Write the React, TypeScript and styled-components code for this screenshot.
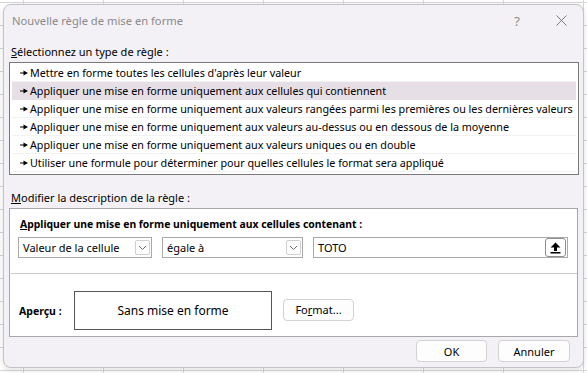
import React from 'react';
import styled, { createGlobalStyle } from 'styled-components';

// Page: Excel grid behind the dialog
const GlobalStyle = createGlobalStyle`
  html, body {
    margin: 0;
    padding: 0;
    width: 587px;
    height: 373px;
    overflow: hidden;
    background-color: #ffffff;
    background-image:
      repeating-linear-gradient(90deg, transparent 0 23px, #d6d6d6 23px 24px, transparent 24px 80px),
      repeating-linear-gradient(180deg, transparent 0 2px, #d6d6d6 2px 3px, transparent 3px 23px);
    font-family: "Segoe UI", "Noto Sans", sans-serif;
    font-size: 11px;
    color: #000;
  }
  #root {
    padding: 4px 3px 0 3px;
  }
`;

const Dialog = styled.div`
  width: 581px;
  height: 364px;
  box-sizing: border-box;
  background: #f3f1f5;
  border: 1px solid #c4c2c6;
  border-radius: 8px;
  box-shadow: 0 2px 6px rgba(0, 0, 0, 0.12);
  display: flex;
  flex-direction: column;
`;

const TitleBar = styled.div`
  height: 31px;
  display: flex;
  align-items: center;
  padding: 0 0 0 8px;
`;

const Title = styled.div`
  flex: 1;
  font-size: 11.2px;
  color: #8a8a8a;
`;

const TitleButton = styled.div`
  width: 44px;
  height: 31px;
  display: flex;
  align-items: center;
  justify-content: center;
  color: #8a8a8a;
  font-size: 13px;
`;

const Body = styled.div`
  padding: 0 4px 0 5px;
  display: flex;
  flex-direction: column;
`;

const SectionLabel = styled.div<{ $top: number }>`
  margin-top: ${p => p.$top}px;
  height: 16px;
  line-height: 16px;
  padding-left: 2px;
  margin-bottom: 2px;
`;

const U = styled.span`
  text-decoration: underline;
`;

const RuleList = styled.div`
  height: 113px;
  box-sizing: border-box;
  background: #fff;
  border: 1px solid #7a7a7a;
  padding: 1px 2px;
  display: flex;
  flex-direction: column;
`;

const RuleRow = styled.div<{ $selected?: boolean }>`
  height: 18px;
  flex: none;
  display: flex;
  align-items: center;
  gap: 2px;
  padding-left: 8px;
  font-size: 10.75px;
  background: ${p => (p.$selected ? '#e6dfe6' : '#fff')};
  border-bottom: 1px solid ${p => (p.$selected ? '#e6dfe6' : '#f2f2f2')};
  box-sizing: border-box;
  white-space: nowrap;
  overflow: hidden;

  svg {
    flex: none;
  }
`;

const Panel = styled.div`
  margin-right: 1px;
  background: #fff;
  border: 1px solid #a8a8a8;
  display: flex;
  flex-direction: column;
`;

const PanelHeader = styled.div`
  padding: 7px 0 0 10px;
  height: 16px;
  line-height: 16px;
  font-weight: 700;
  font-size: 10.4px;
`;

const FieldRow = styled.div`
  display: flex;
  gap: 10px;
  padding: 5px 0 0 8px;
`;

const Field = styled.div<{ $w: number }>`
  width: ${p => p.$w}px;
  height: 21px;
  box-sizing: border-box;
  border: 1px solid #a9a9a9;
  background: #fff;
  display: flex;
  align-items: center;
  padding: 0 1px 0 4px;
`;

const FieldText = styled.div`
  flex: 1;
  white-space: nowrap;
`;

const DropButton = styled.div`
  width: 15px;
  height: 15px;
  box-sizing: border-box;
  border: 1px solid #cfcfcf;
  border-radius: 2px;
  display: flex;
  align-items: center;
  justify-content: center;
`;

const RefButton = styled.div`
  width: 21px;
  height: 19px;
  box-sizing: border-box;
  border: 1px solid #8f8f8f;
  border-radius: 3px;
  display: flex;
  align-items: center;
  justify-content: center;
`;

const Separator = styled.div`
  margin: 15px 0 0 1px;
  height: 1px;
  background: #c9c9c9;
`;

const PreviewRow = styled.div`
  display: flex;
  align-items: center;
  padding: 17px 0 6px 9px;
`;

const PreviewLabel = styled.div`
  width: 55px;
  font-weight: 700;
  font-size: 10.5px;
`;

const PreviewBox = styled.div`
  width: 198px;
  height: 39px;
  box-sizing: border-box;
  border: 1px solid #555;
  display: flex;
  align-items: center;
  justify-content: center;
  font-size: 12px;
`;

const Button = styled.div<{ $w: number }>`
  width: ${p => p.$w}px;
  height: 22px;
  box-sizing: border-box;
  background: #fdfdfd;
  border: 1px solid #d2d2d2;
  border-radius: 4px;
  display: flex;
  align-items: center;
  justify-content: center;
`;

const FormatButton = styled(Button)`
  margin: -2px 0 0 11px;
`;

const Footer = styled.div`
  display: flex;
  justify-content: flex-end;
  gap: 11px;
  padding: 3px 9px 0 0;
`;

const Arrow = () => (
  <svg width="8" height="6" viewBox="0 0 8 6">
    <rect x="0" y="2.5" width="4" height="1" fill="#000" />
    <polygon points="3.5,0.5 8,3 3.5,5.5" fill="#000" />
  </svg>
);

const Chevron = () => (
  <svg width="9" height="6" viewBox="0 0 9 6">
    <polyline points="1,1 4.5,4.5 8,1" fill="none" stroke="#6b6b6b" strokeWidth="1" />
  </svg>
);

const UploadIcon = () => (
  <svg width="11" height="12" viewBox="0 0 11 12">
    <polygon points="5.5,0.5 10.5,5.5 7,5.5 7,9 4,9 4,5.5 0.5,5.5" fill="#000" />
    <rect x="0.5" y="10" width="10" height="1.5" fill="#000" />
  </svg>
);

const CloseIcon = () => (
  <svg width="11" height="11" viewBox="0 0 11 11">
    <path d="M0.5 0.5 L10.5 10.5 M10.5 0.5 L0.5 10.5" stroke="#7a7a7a" strokeWidth="1" />
  </svg>
);

const rules = [
  "Mettre en forme toutes les cellules d'après leur valeur",
  'Appliquer une mise en forme uniquement aux cellules qui contiennent',
  'Appliquer une mise en forme uniquement aux valeurs rangées parmi les premières ou les dernières valeurs',
  'Appliquer une mise en forme uniquement aux valeurs au-dessus ou en dessous de la moyenne',
  'Appliquer une mise en forme uniquement aux valeurs uniques ou en double',
  'Utiliser une formule pour déterminer pour quelles cellules le format sera appliqué',
];

const App = () => (
  <>
    <GlobalStyle />
    <Dialog>
      <TitleBar>
        <Title>Nouvelle règle de mise en forme</Title>
        <TitleButton>?</TitleButton>
        <TitleButton>
          <CloseIcon />
        </TitleButton>
      </TitleBar>
      <Body>
        <SectionLabel $top={8}>
          <U>S</U>électionnez un type de règle :
        </SectionLabel>
        <RuleList>
          {rules.map((r, i) => (
            <RuleRow key={i} $selected={i === 1}>
              <Arrow />
              {r}
            </RuleRow>
          ))}
        </RuleList>
        <SectionLabel $top={15}>
          <U>M</U>odifier la description de la règle :
        </SectionLabel>
        <Panel>
          <PanelHeader>
            <U>A</U>ppliquer une mise en forme uniquement aux cellules contenant :
          </PanelHeader>
          <FieldRow>
            <Field $w={134}>
              <FieldText>Valeur de la cellule</FieldText>
              <DropButton>
                <Chevron />
              </DropButton>
            </Field>
            <Field $w={141}>
              <FieldText>égale à</FieldText>
              <DropButton>
                <Chevron />
              </DropButton>
            </Field>
            <Field $w={255}>
              <FieldText>TOTO</FieldText>
              <RefButton>
                <UploadIcon />
              </RefButton>
            </Field>
          </FieldRow>
          <Separator />
          <PreviewRow>
            <PreviewLabel>Aperçu :</PreviewLabel>
            <PreviewBox>Sans mise en forme</PreviewBox>
            <FormatButton $w={71}>
              Fo<U>r</U>mat...
            </FormatButton>
          </PreviewRow>
        </Panel>
        <Footer>
          <Button $w={71}>OK</Button>
          <Button $w={72}>Annuler</Button>
        </Footer>
      </Body>
    </Dialog>
  </>
);

export default App;
